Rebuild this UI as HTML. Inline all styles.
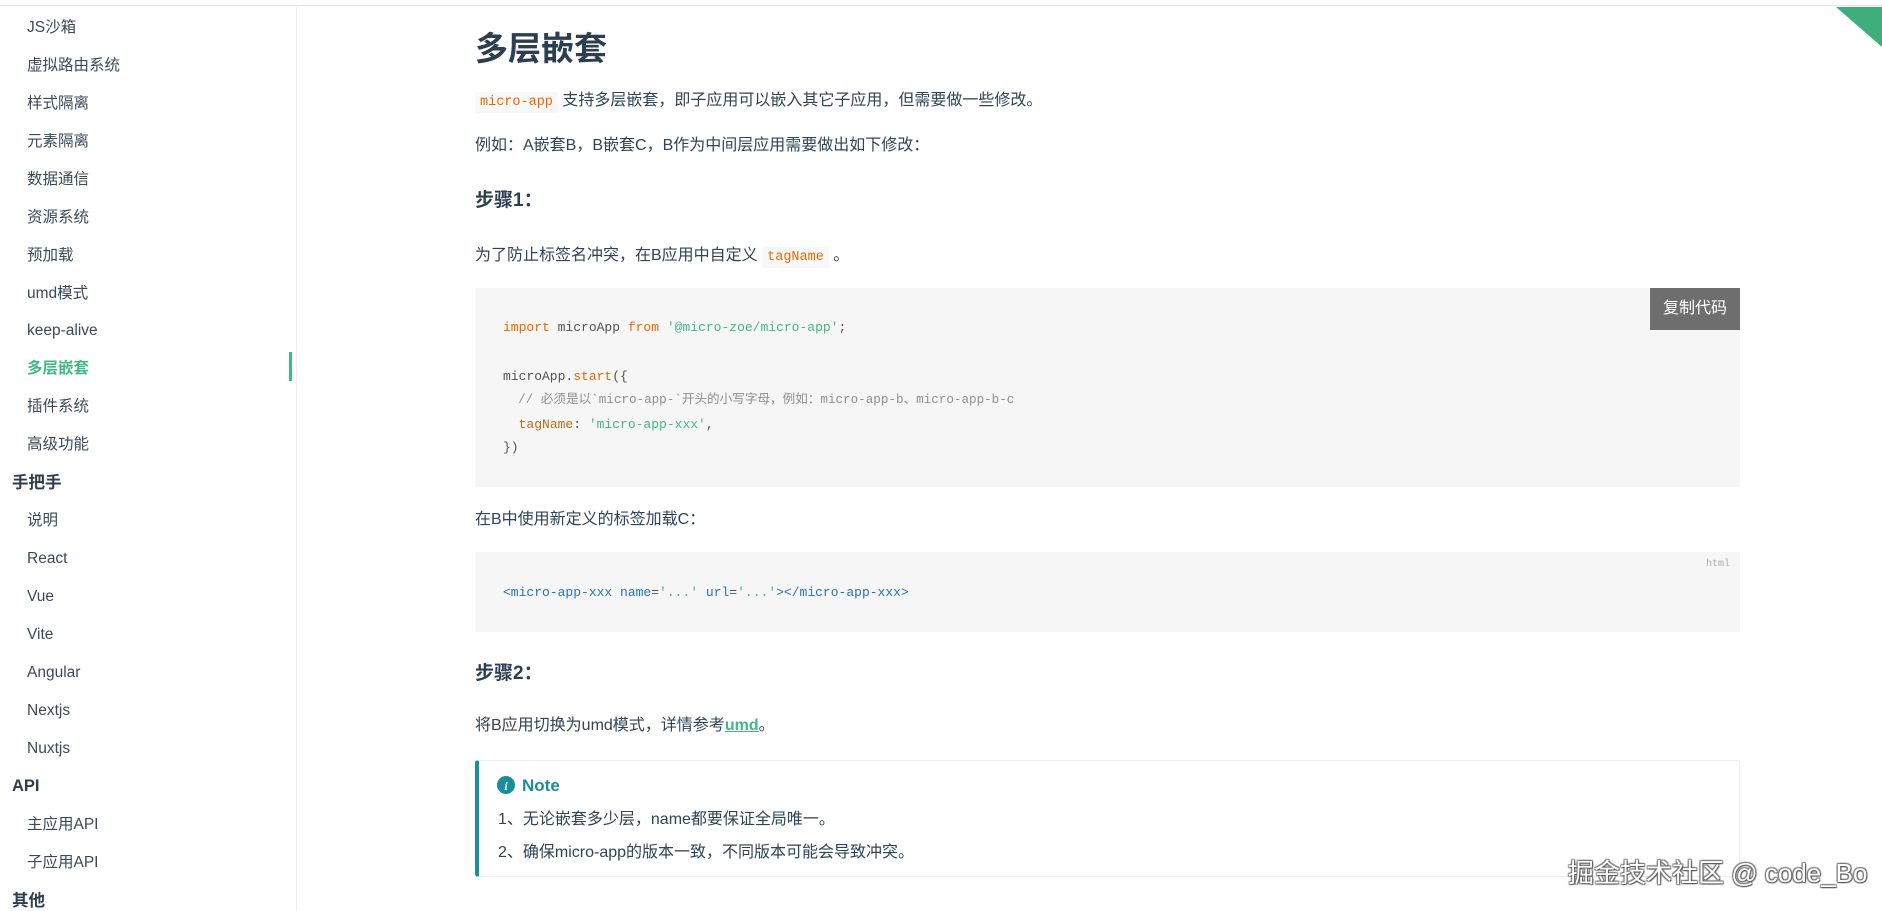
<!DOCTYPE html>
<html><head><meta charset="utf-8"><style>
*{margin:0;padding:0;box-sizing:border-box}
body{width:1882px;height:911px;overflow:hidden;background:#fff;position:relative;font-family:"Liberation Sans","Noto Sans CJK SC",sans-serif;color:#34495e}
.a{position:absolute;white-space:nowrap;line-height:1}
.s{font-size:15.5px;color:#3a4a5a;left:27px}
.h{font-size:16.5px;font-weight:bold;color:#2c3e50;left:12px}
.p{font-size:16px;left:475px;color:#304455}
.m{font-family:"Liberation Mono","Noto Sans CJK SC",monospace}
code.i{font-family:"Liberation Mono",monospace;font-size:13.5px;color:#e96900;background:#f8f8f8;padding:3px 5px;border-radius:2px}
.c{font-family:"Liberation Mono","Noto Sans CJK SC",monospace;font-size:13px;color:#525252;left:503px}
.k{color:#e96900}.g{color:#42b983}.o{color:#b0701a}.cm{color:#8e908c;font-size:12.6px}
.b{color:#2973b7}
</style></head><body>
<div class="a" style="left:0;top:0;width:1882px;height:6px;border-bottom:1px solid #e4e4e4;"></div>
<div class="a" style="left:296px;top:7px;width:1px;height:904px;background:#eee"></div>
<div class="a" style="left:289px;top:352px;width:3px;height:29px;background:#42b983"></div>
<div class="a s" style="top:20px">JS沙箱</div>
<div class="a s" style="top:58px">虚拟路由系统</div>
<div class="a s" style="top:96px">样式隔离</div>
<div class="a s" style="top:134px">元素隔离</div>
<div class="a s" style="top:172px">数据通信</div>
<div class="a s" style="top:210px">资源系统</div>
<div class="a s" style="top:248px">预加载</div>
<div class="a s" style="top:286px">umd模式</div>
<div class="a s" style="top:323px">keep-alive</div>
<div class="a s" style="top:361px;color:#42b983;font-weight:bold">多层嵌套</div>
<div class="a s" style="top:399px">插件系统</div>
<div class="a s" style="top:437px">高级功能</div>
<div class="a h" style="top:475px">手把手</div>
<div class="a s" style="top:513px">说明</div>
<div class="a s" style="top:551px">React</div>
<div class="a s" style="top:589px">Vue</div>
<div class="a s" style="top:627px">Vite</div>
<div class="a s" style="top:665px">Angular</div>
<div class="a s" style="top:703px">Nextjs</div>
<div class="a s" style="top:741px">Nuxtjs</div>
<div class="a h" style="top:778px">API</div>
<div class="a s" style="top:817px">主应用API</div>
<div class="a s" style="top:855px">子应用API</div>
<div class="a h" style="top:893px">其他</div>

<svg class="a" style="left:1836px;top:7px" width="46" height="40"><polygon points="0,0 46,0 46,40" fill="#3eaf7c"/></svg>

<div class="a" style="left:475px;top:32px;font-size:33px;font-weight:bold;color:#2c3e50">多层嵌套</div>
<div class="a p" style="top:93px"><code class="i">micro-app</code> 支持多层嵌套，即子应用可以嵌入其它子应用，但需要做一些修改。</div>
<div class="a p" style="top:138px">例如：A嵌套B，B嵌套C，B作为中间层应用需要做出如下修改：</div>
<div class="a p" style="top:191px;font-size:19px;font-weight:bold;color:#2c3e50">步骤1：</div>
<div class="a p" style="top:248px">为了防止标签名冲突，在B应用中自定义 <code class="i">tagName</code> 。</div>

<div class="a" style="left:475px;top:288px;width:1265px;height:199px;background:#f6f6f6"></div>
<div class="a" style="left:1650px;top:288px;width:90px;height:42px;background:#6e6e6e;color:#fff;font-size:16px;line-height:42px;text-align:center">复制代码</div>
<div class="a c" style="top:321px"><span class="k">import</span> microApp <span class="k">from</span> <span class="g">'@micro-zoe/micro-app'</span>;</div>
<div class="a c" style="top:370px">microApp.<span class="k">start</span>({</div>
<div class="a c cm" style="top:394px">&nbsp;&nbsp;// 必须是以`micro-app-`开头的小写字母，例如：micro-app-b、micro-app-b-c</div>
<div class="a c" style="top:418px">&nbsp;&nbsp;<span class="o">tagName</span>: <span class="g">'micro-app-xxx'</span>,</div>
<div class="a c" style="top:441px">})</div>

<div class="a p" style="top:512px">在B中使用新定义的标签加载C：</div>
<div class="a" style="left:475px;top:552px;width:1265px;height:80px;background:#f6f6f6"></div>
<div class="a m" style="left:1706px;top:560px;font-size:10px;color:#aaa">html</div>
<div class="a c" style="top:586px"><span class="b">&lt;micro-app-xxx</span> <span class="b">name</span>=<span class="g">'...'</span> <span class="b">url</span>=<span class="g">'...'</span><span class="b">&gt;&lt;/micro-app-xxx&gt;</span></div>

<div class="a p" style="top:664px;font-size:19px;font-weight:bold;color:#2c3e50">步骤2：</div>
<div class="a p" style="top:718px">将B应用切换为umd模式，详情参考<span style="color:#42b983;font-weight:bold;text-decoration:underline">umd</span>。</div>

<div class="a" style="left:475px;top:760px;width:1265px;height:117px;border:1px solid #eee;border-left:4px solid #1b8e9e;border-radius:3px"></div>
<svg class="a" style="left:497px;top:776px" width="18" height="18"><circle cx="9" cy="9" r="9" fill="#1b8e9e"/><text x="9" y="14" font-size="12" font-style="italic" font-weight="bold" fill="#fff" text-anchor="middle" font-family="Liberation Serif">i</text></svg>
<div class="a" style="left:522px;top:777px;font-size:17px;font-weight:bold;color:#1b8e9e">Note</div>
<div class="a" style="left:498px;top:812px;font-size:16px;color:#304455">1、无论嵌套多少层，name都要保证全局唯一。</div>
<div class="a" style="left:498px;top:845px;font-size:16px;color:#304455">2、确保micro-app的版本一致，不同版本可能会导致冲突。</div>

<div class="a" style="left:1568px;top:860px;font-size:26px;color:#fff;text-shadow:1px 1px 1px #555,-1px -1px 1px #777,1px -1px 1px #777,-1px 1px 1px #777">掘金技术社区 @ code_Bo</div>
</body></html>
